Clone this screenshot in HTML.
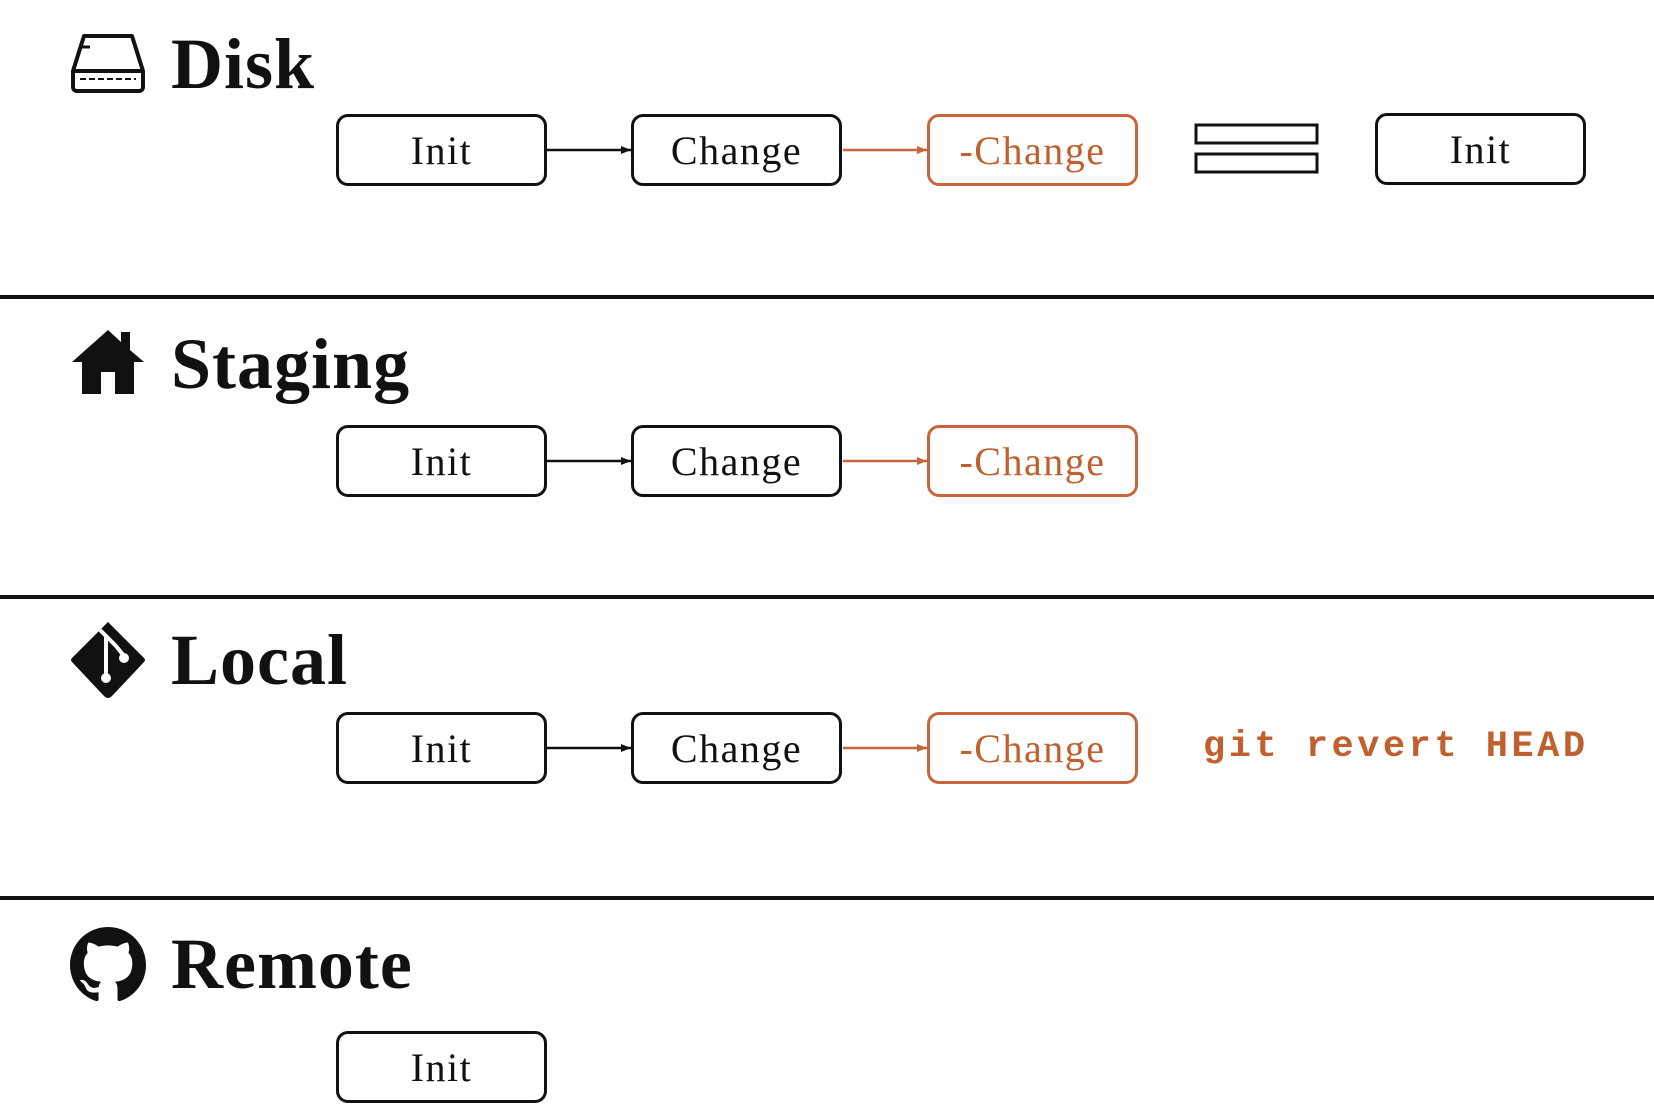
<!DOCTYPE html>
<html><head><meta charset="utf-8"><style>
html,body{margin:0;padding:0;background:#fff;}
body{width:1654px;height:1108px;position:relative;overflow:hidden;font-family:"Liberation Serif",serif;}
.box{position:absolute;box-sizing:border-box;width:211px;height:72px;border:3px solid #111;border-radius:12px;display:flex;align-items:center;justify-content:center;font-size:40px;letter-spacing:1.5px;color:#111;}
.o{border-color:#c8653d;color:#c0602f;}
.hr{position:absolute;left:0;width:1654px;height:4px;background:#111;}
.t{position:absolute;left:171px;font-size:72px;font-weight:bold;letter-spacing:1px;color:#111;line-height:1;}
.ic{position:absolute;left:70px;}
svg.ar{position:absolute;left:0;top:0;}
.code{position:absolute;left:1203px;top:726px;font-family:"Liberation Mono",monospace;font-size:37px;font-weight:bold;letter-spacing:3.5px;color:#c0602f;}
</style></head><body>
<div class="hr" style="top:295px"></div>
<div class="hr" style="top:595px"></div>
<div class="hr" style="top:896px"></div>

<div class="t" style="top:28px">Disk</div>
<div class="t" style="top:328px">Staging</div>
<div class="t" style="top:624px">Local</div>
<div class="t" style="top:928px">Remote</div>

<svg class="ic" style="top:33px" width="76" height="60" viewBox="0 0 76 60"><path d="M14 3 H62 L73 38 V54 a4 4 0 0 1 -4 4 H7 a4 4 0 0 1 -4 -4 V38 Z" fill="none" stroke="#111" stroke-width="4" stroke-linejoin="round"/><line x1="3" y1="38" x2="73" y2="38" stroke="#111" stroke-width="4"/><line x1="10" y1="14" x2="20" y2="14" stroke="#111" stroke-width="3"/><line x1="10" y1="46" x2="66" y2="46" stroke="#111" stroke-width="2" stroke-dasharray="6 3"/></svg>

<svg class="ic" style="top:326px" width="76" height="68" viewBox="0 0 76 68"><path d="M38 4 L2 36 H12 V68 H31 V46 H45 V68 H64 V36 H74 L60 24 V6 H51 V16 Z" fill="#111"/></svg>

<svg class="ic" style="top:620px" width="76" height="80" viewBox="0 0 76 80"><path d="M38 2 L74 38 Q76 40 74 42 L42 76 Q38 80 34 76 L2 42 Q0 40 2 38 L30 10 Z" fill="#111"/><path d="M30 10 L46 26 M36 16 V56 M46 26 L54 36" stroke="#fff" stroke-width="4" fill="none"/><circle cx="36" cy="58" r="5" fill="#fff"/><circle cx="54" cy="38" r="5" fill="#fff"/></svg>

<svg class="ic" style="top:927px" width="76" height="76" viewBox="0 0 16 16"><path fill="#111" d="M8 0C3.580 0 0 3.58 0 8c0 3.54 2.29 6.53 5.470 7.59.4.07.55-.17.55-.38 0-.19-.01-.82-.01-1.490-2.01.37-2.53-.49-2.69-.94-.09-.23-.48-.94-.82-1.130-.28-.15-.68-.52-.01-.53.63-.01 1.08.58 1.23.82.72 1.21 1.870.87 2.33.66.07-.52.28-.87.51-1.07-1.78-.2-3.64-.89-3.64-3.95 0-.87.31-1.59.82-2.15-.08-.2-.36-1.020.08-2.12 0 0 .67-.21 2.2.82.64-.18 1.32-.27 2-.27.68 0 1.36.09 2 .27 1.53-1.04 2.2-.82 2.2-.82.44 1.1.16 1.92.08 2.12.51.56.82 1.27.82 2.15 0 3.07-1.87 3.75-3.65 3.95.29.25.54.73.54 1.48 0 1.07-.01 1.93-.01 2.2 0 .21.15.46.55.38A8.013 8.013 0 0016 8c0-4.42-3.58-8-8-8z"/></svg>

<svg class="ar" width="1654" height="1108">
<defs>
<marker id="a" markerUnits="userSpaceOnUse" markerWidth="10" markerHeight="10" refX="10" refY="5" orient="auto"><path d="M0 1 L10 5 L0 9 Z" fill="#111"/></marker>
<marker id="b" markerUnits="userSpaceOnUse" markerWidth="10" markerHeight="10" refX="10" refY="5" orient="auto"><path d="M0 1 L10 5 L0 9 Z" fill="#c8653d"/></marker>
</defs>
<g stroke-width="2.5">
<line x1="547" y1="150" x2="631" y2="150" stroke="#111" marker-end="url(#a)"/>
<line x1="843" y1="150" x2="927" y2="150" stroke="#c8653d" marker-end="url(#b)"/>
<line x1="547" y1="461" x2="631" y2="461" stroke="#111" marker-end="url(#a)"/>
<line x1="843" y1="461" x2="927" y2="461" stroke="#c8653d" marker-end="url(#b)"/>
<line x1="547" y1="748" x2="631" y2="748" stroke="#111" marker-end="url(#a)"/>
<line x1="843" y1="748" x2="927" y2="748" stroke="#c8653d" marker-end="url(#b)"/>
</g>
<rect x="1196" y="125" width="121" height="18" fill="none" stroke="#111" stroke-width="3"/>
<rect x="1196" y="154" width="121" height="18" fill="none" stroke="#111" stroke-width="3"/>
</svg>

<div class="box" style="left:336px;top:114px">Init</div>
<div class="box" style="left:631px;top:114px">Change</div>
<div class="box o" style="left:927px;top:114px">-Change</div>
<div class="box" style="left:1375px;top:113px">Init</div>

<div class="box" style="left:336px;top:425px">Init</div>
<div class="box" style="left:631px;top:425px">Change</div>
<div class="box o" style="left:927px;top:425px">-Change</div>

<div class="box" style="left:336px;top:712px">Init</div>
<div class="box" style="left:631px;top:712px">Change</div>
<div class="box o" style="left:927px;top:712px">-Change</div>
<div class="code">git revert HEAD</div>

<div class="box" style="left:336px;top:1031px">Init</div>
</body></html>
